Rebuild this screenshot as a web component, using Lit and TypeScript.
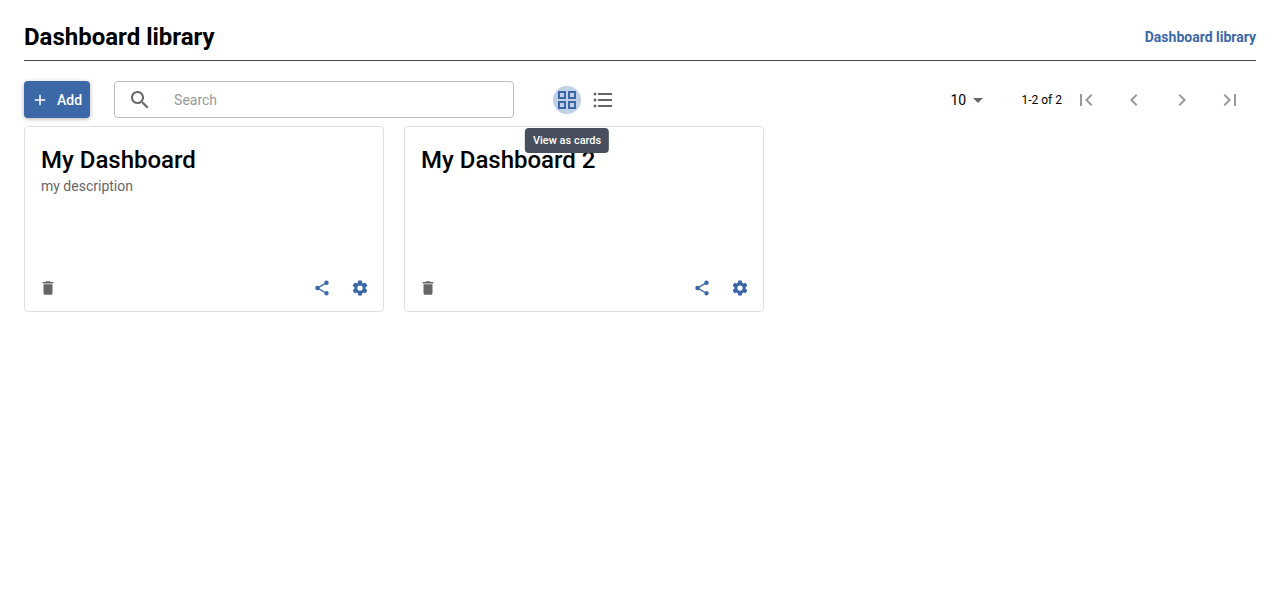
import { LitElement, css, html, svg } from "lit";
import { customElement, property, state } from "lit/decorators.js";
import { classMap } from "lit/directives/class-map.js";

const icons: Record<string, string> = {
  plus: "M19,13H13V19H11V13H5V11H11V5H13V11H19V13Z",
  search:
    "M15.5 14h-.79l-.28-.27C15.41 12.59 16 11.11 16 9.5 16 5.91 13.09 3 9.5 3S3 5.91 3 9.5 5.91 16 9.5 16c1.61 0 3.09-.59 4.23-1.57l.27.28v.79l5 4.99L20.49 19l-4.99-5zm-6 0C7.01 14 5 11.99 5 9.5S7.01 5 9.5 5 14 7.01 14 9.5 11.99 14 9.5 14z",
  grid: "M3 11H11V3H3M5 5H9V9H5M13 21H21V13H13M15 15H19V19H15M3 21H11V13H3M5 15H9V19H5M13 3V11H21V3M19 9H15V5H19Z",
  list: "M7,5H21V7H7V5M7,13V11H21V13H7M4,4.5A1.5,1.5 0 0,1 5.5,6A1.5,1.5 0 0,1 4,7.5A1.5,1.5 0 0,1 2.5,6A1.5,1.5 0 0,1 4,4.5M4,10.5A1.5,1.5 0 0,1 5.5,12A1.5,1.5 0 0,1 4,13.5A1.5,1.5 0 0,1 2.5,12A1.5,1.5 0 0,1 4,10.5M7,19V17H21V19H7M4,16.5A1.5,1.5 0 0,1 5.5,18A1.5,1.5 0 0,1 4,19.5A1.5,1.5 0 0,1 2.5,18A1.5,1.5 0 0,1 4,16.5Z",
  caret: "M7 10l5 5 5-5z",
  first: "M18.41 16.59L13.82 12l4.59-4.59L17 6l-6 6 6 6zM6 6h2v12H6z",
  previous: "M15.41 7.41L14 6l-6 6 6 6 1.41-1.41L10.83 12z",
  next: "M10 6L8.59 7.41 13.17 12l-4.58 4.59L10 18l6-6z",
  last: "M5.59 7.41L10.18 12l-4.59 4.59L7 18l6-6-6-6zM16 6h2v12h-2z",
  trash:
    "M19,4H15.5L14.5,3H9.5L8.5,4H5V6H19M6,19A2,2 0 0,0 8,21H16A2,2 0 0,0 18,19V7H6V19Z",
  share:
    "M18,16.08C17.24,16.08 16.56,16.38 16.04,16.85L8.91,12.7C8.96,12.47 9,12.24 9,12C9,11.76 8.96,11.53 8.91,11.3L15.96,7.19C16.5,7.69 17.21,8 18,8A3,3 0 0,0 21,5A3,3 0 0,0 18,2A3,3 0 0,0 15,5C15,5.24 15.04,5.47 15.09,5.7L8.04,9.81C7.5,9.31 6.79,9 6,9A3,3 0 0,0 3,12A3,3 0 0,0 6,15C6.79,15 7.5,14.69 8.04,14.19L15.16,18.34C15.11,18.55 15.08,18.77 15.08,19C15.08,20.61 16.39,21.91 18,21.91C19.61,21.91 20.92,20.61 20.92,19A2.92,2.92 0 0,0 18,16.08Z",
  cog: "M12,15.5A3.5,3.5 0 0,1 8.5,12A3.5,3.5 0 0,1 12,8.5A3.5,3.5 0 0,1 15.5,12A3.5,3.5 0 0,1 12,15.5M19.43,12.97C19.47,12.65 19.5,12.33 19.5,12C19.5,11.67 19.47,11.34 19.43,11L21.54,9.37C21.73,9.22 21.78,8.95 21.66,8.73L19.66,5.27C19.54,5.05 19.27,4.96 19.05,5.05L16.56,6.05C16.04,5.66 15.5,5.32 14.87,5.07L14.5,2.42C14.46,2.18 14.25,2 14,2H10C9.75,2 9.54,2.18 9.5,2.42L9.13,5.07C8.5,5.32 7.96,5.66 7.44,6.05L4.95,5.05C4.73,4.96 4.46,5.05 4.34,5.27L2.34,8.73C2.21,8.95 2.27,9.22 2.46,9.37L4.57,11C4.53,11.34 4.5,11.67 4.5,12C4.5,12.33 4.53,12.65 4.57,12.97L2.46,14.63C2.27,14.78 2.21,15.05 2.34,15.27L4.34,18.73C4.46,18.95 4.73,19.03 4.95,18.95L7.44,17.94C7.96,18.34 8.5,18.68 9.13,18.93L9.5,21.58C9.54,21.82 9.75,22 10,22H14C14.25,22 14.46,21.82 14.5,21.58L14.87,18.93C15.5,18.67 16.04,18.34 16.56,17.94L19.05,18.95C19.27,19.03 19.54,18.95 19.66,18.73L21.66,15.27C21.78,15.05 21.73,14.78 21.54,14.63L19.43,12.97Z",
};

const icon = (name: string, size = 24) => html`
  <svg width=${size} height=${size} viewBox="0 0 24 24" aria-hidden="true">
    ${svg`<path fill="currentColor" d=${icons[name]}></path>`}
  </svg>
`;

const base = css`
  * {
    box-sizing: border-box;
  }
  svg {
    display: block;
    flex: none;
  }
  button {
    display: flex;
    align-items: center;
    justify-content: center;
    padding: 0;
    border: 0;
    background: none;
    color: inherit;
    font: inherit;
    cursor: pointer;
  }
`;

interface Dashboard {
  title: string;
  description: string;
}

@customElement("dashboard-card")
export class DashboardCard extends LitElement {
  @property() heading = "";
  @property() description = "";

  static styles = [
    base,
    css`
      :host {
        display: block;
      }
      .card {
        display: flex;
        flex-direction: column;
        min-height: 186px;
        padding: 17px 8px 8px;
        border: 1px solid #e0e0e0;
        border-radius: 4px;
        background: #fff;
      }
      .heading {
        margin: 0;
        padding: 0 8px;
        font-size: 24px;
        line-height: 32px;
        font-weight: 500;
        color: #000;
      }
      .description {
        margin: 0;
        padding: 0 8px;
        font-size: 14px;
        line-height: 20px;
        color: #666;
      }
      .actions {
        display: flex;
        gap: 8px;
        margin-top: auto;
        color: #3c68a7;
      }
      .action {
        width: 30px;
        height: 30px;
      }
      .remove {
        margin-right: auto;
        color: #666;
      }
    `,
  ];

  render() {
    return html`
      <article class="card">
        <h2 class="heading">${this.heading}</h2>
        <p class="description">${this.description}</p>
        <div class="actions">
          <button class="action remove" aria-label="Delete">${icon("trash", 18)}</button>
          <button class="action" aria-label="Share">${icon("share", 18)}</button>
          <button class="action" aria-label="Settings">${icon("cog", 18)}</button>
        </div>
      </article>
    `;
  }
}

@customElement("app-root")
export class AppRoot extends LitElement {
  @state() private view: "grid" | "list" = "grid";

  private dashboards: Dashboard[] = [
    { title: "My Dashboard", description: "my description" },
    { title: "My Dashboard 2", description: "" },
  ];

  static styles = [
    base,
    css`
      :host {
        display: block;
        padding: 14px 24px;
        font-family: Roboto, "Liberation Sans", sans-serif;
        font-size: 14px;
        color: #000;
      }
      .header {
        display: flex;
        align-items: center;
        justify-content: space-between;
        height: 47px;
        border-bottom: 1px solid #444;
      }
      .title {
        margin: 0;
        font-size: 24px;
        line-height: 32px;
        font-weight: 700;
      }
      .crumb {
        color: #3c68a7;
        font-weight: 700;
        text-decoration: none;
      }
      .toolbar {
        display: flex;
        align-items: center;
        margin: 20px 0 8px;
      }
      .add {
        gap: 8px;
        height: 37px;
        padding: 0 8px 0 7px;
        border-radius: 4px;
        background: #3c68a7;
        color: #fff;
        font-weight: 500;
        box-shadow: 0 1px 4px rgba(0, 0, 0, 0.3);
      }
      .search {
        display: flex;
        align-items: center;
        gap: 22px;
        width: 400px;
        height: 37px;
        margin-left: 24px;
        padding: 0 13px;
        border: 1px solid #bdbdbd;
        border-radius: 4px;
        color: #666;
      }
      .query {
        flex: 1;
        min-width: 0;
        padding: 0;
        border: 0;
        outline: 0;
        background: none;
        font: inherit;
        color: #000;
      }
      .query::placeholder {
        color: #999;
        opacity: 1;
      }
      .views {
        display: flex;
        gap: 8px;
        margin-left: 39px;
        color: #666;
      }
      .choice {
        position: relative;
      }
      .toggle {
        width: 28px;
        height: 28px;
        border-radius: 50%;
      }
      .toggle.active {
        background: #c1d0e5;
        color: #3c68a7;
      }
      .tooltip {
        position: absolute;
        z-index: 1;
        top: 42px;
        left: 50%;
        transform: translateX(-50%);
        padding: 0 8px;
        border-radius: 4px;
        background: #474f5c;
        color: #fff;
        font-size: 11px;
        line-height: 25px;
        font-weight: 500;
        white-space: nowrap;
      }
      .pager {
        display: flex;
        align-items: center;
        margin-left: auto;
        padding-right: 2px;
      }
      .size {
        display: grid;
        align-items: center;
        width: 40px;
        margin-right: 31px;
        color: #666;
      }
      .size > * {
        grid-area: 1 / 1;
      }
      .size svg {
        justify-self: end;
        pointer-events: none;
      }
      .count {
        appearance: none;
        width: 100%;
        padding: 0;
        border: 0;
        background: none;
        font: inherit;
        color: #000;
      }
      .range {
        font-size: 12px;
      }
      .page {
        width: 48px;
        height: 36px;
        color: #999;
      }
      .cards {
        display: grid;
        grid-template-columns: repeat(auto-fill, 360px);
        gap: 20px;
      }
      .cards.rows {
        grid-template-columns: 1fr;
      }
    `,
  ];

  private page(name: string, label: string) {
    return html`<button class="page" aria-label=${label} disabled>${icon(name)}</button>`;
  }

  render() {
    const grid = this.view === "grid";
    return html`
      <header class="header">
        <h1 class="title">Dashboard library</h1>
        <a class="crumb" href="#">Dashboard library</a>
      </header>
      <div class="toolbar">
        <button class="add">${icon("plus", 18)}<span>Add</span></button>
        <label class="search">
          ${icon("search")}
          <input class="query" type="text" placeholder="Search" aria-label="Search" />
        </label>
        <div class="views">
          <div class="choice">
            <button
              class=${classMap({ toggle: true, active: grid })}
              aria-label="View as cards"
              aria-describedby="cards-tip"
              @click=${() => (this.view = "grid")}
            >
              ${icon("grid")}
            </button>
            <span class="tooltip" id="cards-tip" role="tooltip">View as cards</span>
          </div>
          <button
            class=${classMap({ toggle: true, active: !grid })}
            aria-label="View as list"
            @click=${() => (this.view = "list")}
          >
            ${icon("list")}
          </button>
        </div>
        <nav class="pager" aria-label="Pagination">
          <label class="size">
            <select class="count" aria-label="Items per page">
              <option>10</option>
              <option>25</option>
              <option>50</option>
            </select>
            ${icon("caret")}
          </label>
          <span class="range">1-2 of 2</span>
          ${this.page("first", "First page")} ${this.page("previous", "Previous page")}
          ${this.page("next", "Next page")} ${this.page("last", "Last page")}
        </nav>
      </div>
      <main class=${classMap({ cards: true, rows: !grid })}>
        ${this.dashboards.map(
          (d) => html`<dashboard-card .heading=${d.title} .description=${d.description}></dashboard-card>`,
        )}
      </main>
    `;
  }
}
